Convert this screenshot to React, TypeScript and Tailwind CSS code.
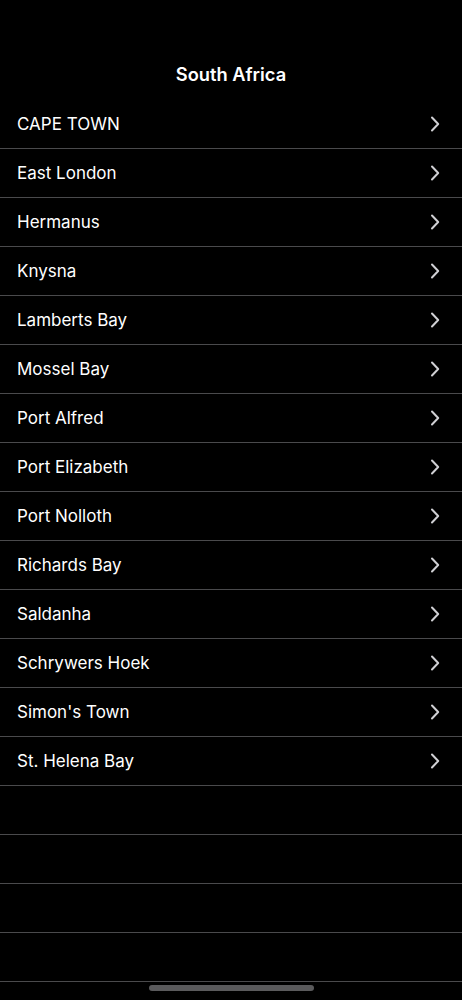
import React from "react";

const cities = [
  "CAPE TOWN",
  "East London",
  "Hermanus",
  "Knysna",
  "Lamberts Bay",
  "Mossel Bay",
  "Port Alfred",
  "Port Elizabeth",
  "Port Nolloth",
  "Richards Bay",
  "Saldanha",
  "Schrywers Hoek",
  "Simon's Town",
  "St. Helena Bay",
];

function Chevron() {
  return (
    <svg width="10" height="16" viewBox="0 0 10 16" fill="none" className="mr-[22px]">
      <path d="M2 1.5 L8.2 8 L2 14.5" stroke="#d0d0d4" strokeWidth="2" strokeLinecap="round" strokeLinejoin="round" />
    </svg>
  );
}

export default function App() {
  return (
    <div
      className="w-[462px] h-[1000px] bg-black text-white flex flex-col overflow-hidden"
      style={{ fontFamily: "Inter, 'Noto Sans', sans-serif" }}
    >
      <div className="h-[100px] flex items-start justify-center pt-[60px]">
        <h1 className="text-[18.3px] font-semibold leading-[28px]">South Africa</h1>
      </div>
      <div className="flex flex-col">
        {cities.map((c) => (
          <div key={c} className="h-[49px] flex items-center justify-between border-b border-[#4a4a4c] pl-[17px]">
            <span className="text-[17px] leading-none">{c}</span>
            <Chevron />
          </div>
        ))}
        {[0, 1, 2, 3].map((i) => (
          <div key={i} className="h-[49px] border-b border-[#4a4a4c]" />
        ))}
      </div>
      <div className="flex-1 flex justify-center pt-[3px]">
        <div className="w-[165px] h-[6px] rounded-full bg-[#5a5a5c]" />
      </div>
    </div>
  );
}
